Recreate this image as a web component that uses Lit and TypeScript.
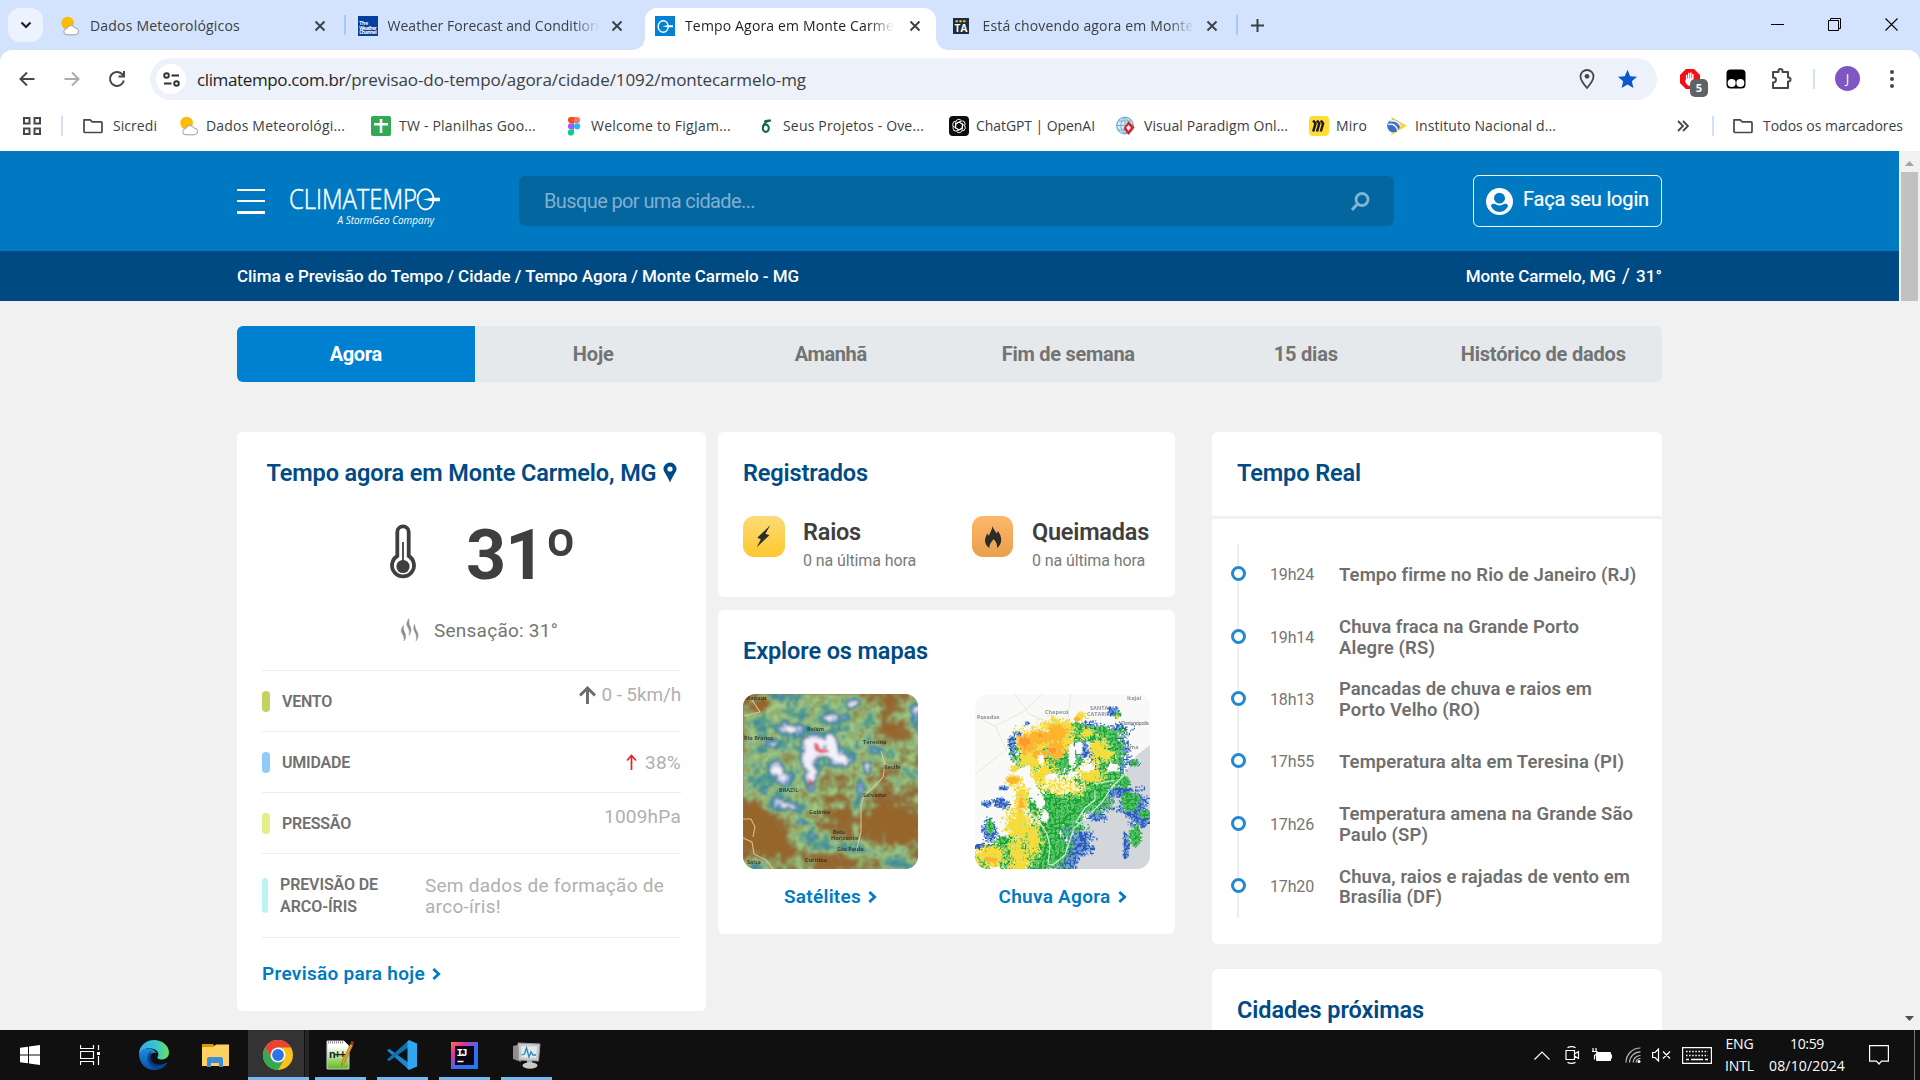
import { LitElement, html, svg, css } from "lit";
import { customElement, property } from "lit/decorators.js";

/* ---------- label whose tracking is set so that it fills a given width ---------- */
@customElement("fit-text")
class FitText extends LitElement {
  @property({ type: Number }) w = 0;
  @property() text = "";
  static styles = css`
    :host { display: block; white-space: nowrap; flex: none; }
    span { display: inline-block; white-space: pre; }
  `;
  updated() {
    const s = this.renderRoot.querySelector("span") as HTMLElement;
    s.style.letterSpacing = "0";
    const nat = s.getBoundingClientRect().width;
    s.style.letterSpacing = (this.w - nat) / this.text.length + "px";
    this.style.width = this.w + "px";
  }
  render() {
    return html`<span>${this.text}</span>`;
  }
}
const T = (text: string, w: number, cls = "") => html`<fit-text class=${cls} .text=${text} .w=${w}></fit-text>`;

/* ---------- procedural map tiles ---------- */
const hash = (x: number, y: number, s: number) => {
  const n = Math.sin(x * 127.1 + y * 311.7 + s * 74.7) * 43758.5453;
  return n - Math.floor(n);
};
const noise = (x: number, y: number, s: number) => {
  const xi = Math.floor(x), yi = Math.floor(y);
  const f = (t: number) => t * t * (3 - 2 * t);
  const u = f(x - xi), v = f(y - yi);
  const a = hash(xi, yi, s), b = hash(xi + 1, yi, s), c = hash(xi, yi + 1, s), d = hash(xi + 1, yi + 1, s);
  return (a + (b - a) * u) * (1 - v) + (c + (d - c) * u) * v;
};
const fbm = (x: number, y: number, s: number) =>
  noise(x / 16, y / 16, s) * 0.35 + noise(x / 7, y / 7, s + 1) * 0.35 + noise(x / 3, y / 3, s + 2) * 0.3;

type Blob4 = [number, number, number, number, number?];
const raster = (cell: number, pick: (x: number, y: number) => string) => {
  const n = Math.ceil(175 / cell);
  const out: Record<string, string> = {};
  for (let j = 0; j < n; j++) {
    let i = 0;
    while (i < n) {
      const c = pick((i + 0.5) * cell, (j + 0.5) * cell);
      let k = i + 1;
      while (k < n && pick((k + 0.5) * cell, (j + 0.5) * cell) === c) k++;
      if (c) out[c] = (out[c] || "") + `M${(i * cell).toFixed(2)} ${(j * cell).toFixed(2)}h${((k - i) * cell).toFixed(2)}v${cell}h-${((k - i) * cell).toFixed(2)}z`;
      i = k;
    }
  }
  return Object.entries(out).map(([c, d]) => svg`<path fill=${c} d=${d}></path>`);
};

const SAT: Blob4[] = [
  [72, 50, 9, 7, 0.7], [66, 64, 7, 8, 0.65], [68, 82, 7, 10, 0.6], [88, 50, 5, 9, 0.65], [83, 60, 9, 4, 0.45], [69, 95, 4, 6, 0.4], [76, 62, 20, 26, 0.18],
  [110, 10, 6, 5, 0.55], [90, 24, 13, 5, 0.45], [45, 35, 13, 5, 0.5], [30, 50, 9, 5, 0.4], [40, 3, 16, 6, 0.35], [60, 18, 8, 10, 0.2],
  [33, 75, 8, 8, 0.4], [40, 84, 7, 6, 0.35], [36, 112, 13, 9, 0.48], [60, 129, 8, 4, 0.38], [58, 115, 8, 6, 0.26], [100, 68, 9, 6, 0.5], [124, 76, 4, 7, 0.5],
  [173, 22, 7, 18, 0.5], [117, 92, 4, 14, 0.34], [113, 120, 5, 24, 0.34], [132, 55, 8, 12, 0.2], [15, 25, 25, 22, 0.14], [95, 60, 14, 10, 0.2],
  [40, 60, 32, 44, 0.16], [115, 25, 32, 24, 0.15], [60, 146, 14, 7, 0.18], [80, 146, 16, 7, 0.2], [102, 150, 20, 7, 0.24],
  [130, 156, 24, 8, 0.26], [158, 170, 18, 7, 0.26], [160, 85, 18, 16, 0.18], [12, 172, 18, 6, 0.24], [155, 60, 22, 14, 0.12], [60, 138, 16, 5, 0.14],
  [10, 90, 20, 12, 0.2], [80, 120, 20, 14, 0.08], [80, 155, 22, 5, 0.16],
  [148, 36, 13, 10, -0.3], [100, 98, 10, 10, -0.16], [92, 125, 20, 12, -0.26], [150, 125, 30, 22, -0.34], [10, 122, 26, 16, -0.3], [30, 150, 26, 18, -0.34], [20, 12, 12, 7, -0.2], [150, 4, 20, 8, -0.24], [95, 172, 30, 6, -0.16], [150, 145, 18, 6, -0.1],
];
const SATC: [number, string][] = [
  [0.18, "#96652b"], [0.25, "#946b35"], [0.3, "#8f7c46"], [0.36, "#8c9258"], [0.42, "#92ad6b"], [0.5, "#9dc987"],
  [0.56, "#78b591"], [0.63, "#4ba092"], [0.71, "#3e8da6"], [0.79, "#6a9dce"], [0.88, "#bccbee"],
];
const satPick = (x: number, y: number) => {
  let v = (fbm(x, y, 3) - 0.5) * 0.72 + 0.33;
  for (const [cx, cy, rx, ry, a = 0] of SAT) v += a * Math.exp(-(((x - cx) / rx) ** 2) - ((y - cy) / ry) ** 2);
  for (const [t, c] of SATC) if (v < t) return c;
  return "#f2f0fa";
};

const BLUE: Blob4[] = [[106, 55, 8, 14], [103, 150, 15, 12], [94, 163, 11, 11], [143, 98, 15, 6], [160, 112, 15, 16], [165, 126, 11, 9], [151, 152, 3, 12], [12, 110, 5, 3], [26, 110, 8, 5], [15, 136, 7, 11], [38, 52, 4, 12], [52, 30, 3, 3], [138, 18, 6, 5], [84, 168, 12, 6], [122, 122, 10, 6], [96, 132, 10, 12], [28, 94, 6, 3], [8, 152, 10, 3], [42, 40, 4, 3], [133, 64, 18, 20], [125, 38, 26, 10], [159, 69, 6, 4], [120, 105, 18, 16]];
const GREEN: Blob4[] = [[85, 62, 20, 22], [86, 115, 28, 30], [112, 100, 24, 20], [134, 60, 16, 20], [122, 41, 26, 9], [65, 155, 28, 28], [155, 108, 9, 9], [160, 142, 7, 11], [159, 69, 5, 3], [15, 132, 4, 7], [100, 36, 14, 7], [150, 88, 6, 6], [75, 140, 14, 32], [35, 160, 22, 18], [60, 110, 7, 16], [142, 21, 4, 3], [132, 84, 16, 12], [8, 170, 10, 8], [170, 120, 6, 5], [56, 62, 18, 16]];
const YELLOW: Blob4[] = [[58, 62, 15, 17], [73, 45, 29, 13], [70, 82, 14, 17], [88, 93, 22, 9], [46, 104, 7, 19], [45, 132, 15, 17], [44, 158, 12, 24], [15, 163, 16, 12], [124, 56, 9, 13], [114, 80, 13, 10], [82, 33, 19, 8], [40, 74, 5, 4], [104, 23, 7, 5], [112, 38, 6, 5], [38, 87, 9, 6], [142, 24, 2, 2], [58, 145, 9, 18], [132, 60, 8, 9]];
const ORANGE: Blob4[] = [[51, 50, 9, 11], [66, 60, 9, 5], [80, 58, 10, 10], [82, 37, 9, 8], [38, 86, 7, 4], [46, 110, 3, 8], [102, 25, 4, 3], [66, 44, 15, 7], [15, 166, 6, 3]];
const HOT: Blob4[] = [[51, 48, 6, 6], [78, 56, 5, 4], [66, 42, 4, 3]];
const VOID: Blob4[] = [[51, 78, 5, 8], [54, 88, 5, 8], [59, 98, 5, 9], [65, 108, 5, 9], [70, 122, 4, 7], [97, 62, 3.5, 12], [104, 54, 4, 7], [66, 66, 3.5, 7], [138, 74, 7, 5], [112, 74, 7, 4], [76, 83, 7, 3]];
const inside = (x: number, y: number, list: Blob4[], s: number, amp: number, grain: number) => {
  let m = -9;
  for (const [cx, cy, rx, ry] of list) m = Math.max(m, 1 - Math.hypot((x - cx) / rx, (y - cy) / ry));
  if (m < -0.6) return false;
  return m + (fbm(x * 1.4, y * 1.4, s) - 0.5) * amp + (hash(x, y, s) - 0.5) * grain > 0.06;
};
const rainPick = (x: number, y: number) => {
  if (inside(x, y, VOID, 5, 0.7, 0.4)) return "";
  if (inside(x, y, HOT, 8, 1, 0.4)) return "#fd9a26";
  if (inside(x, y, ORANGE, 11, 1.1, 0.5)) return "#fcb52b";
  if (inside(x, y, YELLOW, 14, 1.2, 0.75)) {
    const h = hash(x, y, 2);
    if (Math.hypot((x - 88) / 22, (y - 90) / 10) < 1 && h > 0.55) return "#f6f6cf";
    return h > 0.85 ? "#c3d83e" : "#fbdb2f";
  }
  if (inside(x, y, GREEN, 17, 0.9, 0.45)) return hash(x, y, 6) > 0.65 ? "#3fbf50" : "#1ca437";
  if (inside(x, y, BLUE, 21, 1.3, 0.6)) return hash(x, y, 9) > 0.72 ? "#5f97d6" : "#2c5bbf";
  return "";
};

const satMap = html`<svg class="map" viewBox="0 0 175 175">
  <defs><filter id="sb"><feGaussianBlur stdDeviation="0.9" /></filter></defs>
  <rect width="175" height="175" fill="#94703c" />
  <g filter="url(#sb)">${raster(1.4, satPick)}</g>
  <g fill="none" stroke="#eccba5" stroke-width="1.1" opacity=".85">
    <path d="M0 125h8l4 8-2 10M0 144l9 4 2 12 12 6 7 9M138 57l4 14-2 12-10 11-9 7-3 10v27l-5 20M9 6l8 12-16 4" />
  </g>
  <g fill="#e0404f" opacity=".8" filter="url(#sb)"><path d="M71 49l4 1 2 5 8 1 1 2-9 1-5-3zM66 84l4 5-2 5-2-4z" /></g>
  <g class="mt" fill="#222" opacity=".75">
    <text x="2" y="6">Manaus</text><text x="1" y="46">Rio Branco</text><text x="64" y="37">Belém</text><text x="120" y="50">Teresina</text><text x="141" y="75">Recife</text>
    <text x="36" y="98">BRAZIL</text><text x="120" y="103">Salvador</text><text x="66" y="120">Goiânia</text><text x="90" y="140">Belo</text><text x="88" y="146">Horizonte</text><text x="94" y="157">São Paulo</text><text x="62" y="168">Curitiba</text><text x="4" y="170">Salta</text>
  </g>
</svg>`;
const rainMap = html`<svg class="map" viewBox="0 0 175 175">
  <rect width="175" height="175" fill="#f9f9f7" />
  <path d="M175 51l-13 10-8 11-11 18-12 16-13 13-18 17-7 18-18 21h100z" fill="#d3d7db" />
  <g fill="none" stroke="#ebe5e2" stroke-width="1"><path d="M0 22l20 10 28-14 20-18M0 80l26-20 22-22 22-10M40 0l14 20 30 12M96 0l-4 30M20 32l12 26" /></g>
  <g class="mt" fill="#8c9499"><text x="115" y="16">SANTA</text><text x="112" y="22">CATARINA</text><text x="146" y="31" textLength="28">Florianópolis</text><text x="70" y="20">Chapecó</text><text x="2" y="25">Posadas</text><text x="139" y="55">Criciúma</text><text x="152" y="6">Itajaí</text><text x="4" y="154">Uruguaiana</text></g>
  <g>${raster(1.25, rainPick)}</g>
  <path d="M102 138l8-2 14-10 14-13 6-2 8 8 1 14-2 20 8 8v14H80l14-12 8-14 8-6-4-4z" fill="#d3d7db" opacity=".0" />
  <g fill="none" stroke="#e9f2ea" stroke-width="1.2" opacity=".85">
    <path d="M44 114l10 4 10 9 8 13 3 12-2 18 5 1 12-10 5-15 4-12 12-10 16-16 10-15 12-12M120 96l0 10-10 8-9 14 10 4M120 90l20-4" />
  </g>
</svg>`;

/* ---------- icons ---------- */
const X = html`<svg class="x" viewBox="0 0 12 12"><path d="M1.500 1.500l9 9M10.500 1.500l-9 9" stroke="#3c4043" stroke-width="1.900" /></svg>`;
const folder = html`<svg class="i20" viewBox="0 0 20 20"><path d="M1 3.800h6.200l2 2H18a1 1 0 0 1 1 1v8.700a1 1 0 0 1-1 1H2a1 1 0 0 1-1-1z" fill="none" stroke="#474747" stroke-width="1.700" stroke-linejoin="round" /></svg>`;
const weather = html`<svg class="i20" viewBox="0 0 20 20"><circle cx="7.600" cy="7" r="6.300" fill="#fbbc04" /><path d="M7 18.800a3.100 3.100 0 0 1-.2-6.200 4.300 4.300 0 0 1 8-.6 3.400 3.400 0 1 1 .6 6.800z" fill="#fff" stroke="#9aa0a6" stroke-width="1" /></svg>`;
const chev = html`<svg class="chev" viewBox="0 0 10 14"><path d="M1.500 1.500L7.500 7l-6 5.500" fill="none" stroke="#007ac3" stroke-width="3" /></svg>`;
const twc = html`<svg class="i20" viewBox="0 0 20 20"><rect width="20" height="20" fill="#053fa0" /><g class="twc" fill="#fff"><text x="1.200" y="8.600">The</text><text x="1.200" y="13.600" textLength="17.500">Weather</text><text x="1.200" y="18.400" textLength="17.500">Channel</text></g></svg>`;
const ctp = html`<svg class="i20" viewBox="0 0 20 20"><rect width="20" height="20" fill="#0083d2" /><ellipse cx="8.200" cy="10.500" rx="5" ry="5.800" fill="none" stroke="#fff" stroke-width="1.400" /><path d="M7.500 10.300l5-1h5.500v2h-5.500z" fill="#fff" /></svg>`;
const ta = html`<svg class="i20" viewBox="0 0 20 20"><rect x="0" y="2" width="16" height="16" fill="#1c2b3f" /><path d="M2.500 5.300h2.400M6.300 5.300h2.400M10.100 5.300h2.400" stroke="#f4c430" stroke-width="2" /><text class="ta" x="1.600" y="16.300" fill="#fff">TA</text></svg>`;
const sheet = html`<svg class="i20" viewBox="0 0 20 20"><rect width="20" height="20" rx="2" fill="#34a853" /><path d="M10 3v14M3 8.300h14" stroke="#fff" stroke-width="2.600" /></svg>`;
const figma = html`<svg class="i20" viewBox="0 0 20 20"><path d="M10 1H7a3.100 3.100 0 0 0 0 6.200h3z" fill="#f24e1e" /><path d="M10 1h3a3.100 3.100 0 0 1 0 6.200h-3z" fill="#ff7262" /><path d="M10 7.200H7a3.100 3.100 0 0 0 0 6.200h3z" fill="#a259ff" /><circle cx="13.100" cy="10.300" r="3.100" fill="#1abcfe" /><path d="M10 13.400H7a3.100 3.100 0 1 0 3 3.100z" fill="#0acf83" /></svg>`;
const overleaf = html`<svg class="i20" viewBox="0 0 20 20"><ellipse cx="8.800" cy="12.300" rx="3" ry="3.700" fill="none" stroke="#12683a" stroke-width="2" /><path d="M5.800 12C5.500 8 9 5.500 14 4.300 10.500 4.500 8 4 7.500 6" fill="none" stroke="#12683a" stroke-width="1.700" /></svg>`;
const gpt = html`<svg class="i20" viewBox="0 0 20 20"><rect width="20" height="20" rx="4" fill="#0d0d0d" /><g fill="none" stroke="#fff" stroke-width=".9">${[0, 60, 120, 180, 240, 300].map((a) => svg`<path transform="rotate(${a} 10 10)" d="M6.800 9.500V6.300a3 3 0 0 1 5.600-1.500M7 8l3.200-1.900 3.800 2.200"></path>`)}</g></svg>`;
const vp = html`<svg class="i20" viewBox="0 0 20 20"><circle cx="9" cy="9.500" r="8.300" fill="#dcecf5" stroke="#6fb1d4" stroke-width="1.300" /><path d="M1 9.500h16M9 1v17M3 5h12M3 14h12M9 1C3.500 6 3.500 13 9 18M9 1c5.500 5 5.500 12 0 17" fill="none" stroke="#6fb1d4" stroke-width="1" /><path d="M12.500 5l6 6.500-6 7.500-5-6.500z" fill="#d8232a" /><path d="M12.500 9l2.500 2.700-2.500 3-2.300-3z" fill="#fff" /></svg>`;
const miro = html`<svg class="i20" viewBox="0 0 20 20"><rect width="20" height="20" rx="4" fill="#ffdd33" /><path d="M4.200 4.500l2.300 3-2.300 8M8 4.500l2.300 3L8 15.500M11.800 4.500l2.300 3-2.300 8" fill="none" stroke="#1a1a2a" stroke-width="2.500" /></svg>`;
const inst = html`<svg class="i20" viewBox="0 0 20 20"><path d="M4.500 1L20 9.800 4.500 19z" fill="#f7d33a" /><circle cx="6.500" cy="10" r="6.300" fill="#3b6fc9" /><path d="M1 8.500c5-1.500 8.500 1 10 6.500M3.500 5c5-1 8.500 2 10 5" fill="none" stroke="#fff" stroke-width="1.300" /></svg>`;

const TABS = [
  { i: weather, t: "Dados Meteorológicos", w: 150, c: "tab t1" },
  { i: twc, t: "Weather Forecast and Condition", w: 211, c: "tab fade" },
  { i: ctp, t: "Tempo Agora em Monte Carme", w: 209, c: "tab active fade" },
  { i: ta, t: "Está chovendo agora em Monte", w: 211, c: "tab fade" },
];
const MARKS: [unknown, string, number][] = [
  [folder, "Sicredi", 44], [weather, "Dados Meteorológi...", 139], [sheet, "TW - Planilhas Goo...", 137], [figma, "Welcome to FigJam...", 140],
  [overleaf, "Seus Projetos - Ove...", 141], [gpt, "ChatGPT | OpenAI", 119], [vp, "Visual Paradigm Onl...", 144], [miro, "Miro", 31], [inst, "Instituto Nacional d...", 141],
];
const NEWS: [string, [string, number][]][] = [
  ["19h24", [["Tempo firme no Rio de Janeiro (RJ)", 297]]],
  ["19h14", [["Chuva fraca na Grande Porto", 240], ["Alegre (RS)", 96]]],
  ["18h13", [["Pancadas de chuva e raios em", 253], ["Porto Velho (RO)", 141]]],
  ["17h55", [["Temperatura alta em Teresina (PI)", 285]]],
  ["17h26", [["Temperatura amena na Grande São", 294], ["Paulo (SP)", 89]]],
  ["17h20", [["Chuva, raios e rajadas de vento em", 291], ["Brasília (DF)", 103]]],
];

const spacing = css`
  .e2 { margin-left: 17px; }
  .e3 { margin-left: 23px; margin-top: -1px; }
  .e4 { margin-left: 20px; }
  .e5 { margin-left: 20px; margin-top: -1px; }
  .e6 { margin-left: 29px; }
  .ap { margin-left: 23px; }
  .s1 { margin-left: 20px; margin-right: 20px; }
  .k1 { margin-left: 22px; } .k2 { margin-left: 26px; } .k3 { margin-left: 28px; } .k4 { margin-left: 26px; }
  .k5 { margin-left: 25px; } .k6 { margin-left: 21px; } .k7 { margin-left: 21px; } .k8 { margin-left: 20px; }
  .k1 fit-text, .k3 fit-text, .k5 fit-text, .k7 fit-text { margin-left: 7px; }
  .k2 fit-text, .k6 fit-text, .k8 fit-text { margin-left: 8px; }
  .k4 fit-text { margin-left: 6px; }
  .more { margin-left: auto; }
  .s2 { margin: 0 19px 0 23px; }
  .last { margin-right: 17px; }
  .last fit-text { margin-left: 10px; }
  .sla { font-size: 20px; margin: 0 6px; font-weight: 400; }
  .two2 { width: 145px; line-height: 21.5px; }
  .ra { margin-right: 2px; }
  .top { margin-top: 28px; }
  .w0 { margin-left: 4px; }
  .ui2 { font-family: "Open Sans", "Noto Sans", sans-serif; }
  .y1 { margin-left: 15px; } .y2 { margin-left: 11px; } .y3 { margin-left: 13px; } .y4 { margin-left: 11px; } .y5 { margin-left: 11px; }
  .y6 { margin-left: 13px; } .y7 { margin-left: 15px; } .y8 { margin-left: 24px; }
`;

@customElement("app-root")
class AppRoot extends LitElement {
  static styles = [css`
    :host { display: flex; flex-direction: column; width: 1920px; height: 1080px; overflow: hidden; font-family: Roboto, sans-serif; background: #f1f1f1; }
    * { box-sizing: border-box; }
    svg { display: block; flex: none; }
    .ui { font-family: "Open Sans", "Noto Sans", sans-serif; color: #3c4043; }
    .i20 { width: 20px; height: 20px; }
    .x { width: 12px; height: 12px; }

    .strip { height: 50px; background: #d3e2fd; display: flex; align-items: stretch; font-size: 14px; flex: none; }
    .drop { width: 35px; height: 34px; margin: 8px 4px 0 8px; border-radius: 12px; background: #ecf2fe; display: flex; align-items: center; justify-content: center; }
    .tab { width: 297.5px; display: flex; align-items: center; padding: 1px 19px 0 13px; flex: none; }
    .tab fit-text { margin-left: 10px; line-height: 20px; overflow: hidden; }
    .tab .x { margin-left: auto; }
    .fade fit-text { -webkit-mask-image: linear-gradient(90deg, #000 88%, transparent); mask-image: linear-gradient(90deg, #000 88%, transparent); }
    .active { position: relative; color: #1f1f1f; }
    .active::before { content: ""; position: absolute; left: 3px; right: 4px; top: 8px; bottom: 0; border-radius: 12px 12px 0 0; background: #fff; }
    .active::after { content: ""; position: absolute; left: -9px; right: -8px; bottom: 0; height: 12px;
      background: radial-gradient(circle at 0 0, transparent 11.5px, #fff 12px) left / 12px 12px no-repeat, radial-gradient(circle at 100% 0, transparent 11.5px, #fff 12px) right / 12px 12px no-repeat; }
    .active > * { position: relative; }
    .tsep { width: 2px; height: 20px; margin: 15px -1px 0; background: #a8c7fa; flex: none; }
    .plus { margin: 18px 0 0 13px; width: 15px; height: 15px; }
    .win { margin-left: auto; display: flex; align-items: center; gap: 44px; padding-right: 22px; height: 49px; }
    .tools { height: 101px; background: #d3e2fd; flex: none; }
    .tw { background: #fff; height: 101px; border-radius: 12px 12px 0 0; }
    .bar { height: 50px; padding-top: 8px; display: flex; align-items: center; }
    .nav { display: flex; gap: 25px; margin-left: 17px; }
    .omni { margin-left: 23px; width: 1507px; height: 42px; border-radius: 21px; background: #ecf1fa; display: flex; align-items: center; padding-left: 6px; font-size: 17px; }
    .site { width: 30px; height: 30px; border-radius: 50%; background: #fff; display: flex; align-items: center; justify-content: center; margin-right: 11px; }
    .dark { color: #1f1f1f; }
    .omni .r { margin-left: auto; margin-right: 19px; display: flex; gap: 22px; align-items: center; }
    .ext { display: flex; align-items: center; margin-left: 23px; flex: 1; }
    .ab { position: relative; width: 29px; height: 34px; padding-top: 7px; }
    .badge { position: absolute; left: 10px; top: 17px; width: 18px; height: 18px; border-radius: 5px; background: #5f6368; color: #fff; font: 700 11px/18px "Open Sans", sans-serif; text-align: center; }
    .av { width: 25px; height: 25px; border-radius: 50%; background: #7e57c2; color: #fff; font-size: 13px; line-height: 25px; text-align: center; }
    .vs { width: 2px; height: 20px; background: #d0e1fc; flex: none; }
    .marks { height: 51px; display: flex; align-items: center; font-size: 14px; color: #3c4043; }
    .mk { display: flex; align-items: center; }
    .mk fit-text { line-height: 20px; margin-left: 10px; }

    .view { display: flex; height: 879px; flex: none; overflow: hidden; }
    .page { width: 1899px; }
    .hd { height: 100px; background: #0079c3; padding: 0 237px; display: flex; align-items: center; }
    .burger { display: flex; flex-direction: column; gap: 9px; width: 28px; }
    .burger i { height: 2px; background: #fff; }
    .burger i:last-child { height: 3px; }
    .logo { margin-left: 25px; width: 152px; height: 46px; overflow: visible; }
    .search { margin-left: 77px; width: 875px; height: 50px; border-radius: 6px; background: #04669f; color: #7fb0d2; font-size: 20px; display: flex; align-items: center; padding: 0 24px 0 25px; }
    .search svg { margin-left: auto; }
    .login { margin-left: auto; width: 189px; height: 52px; border: 1px solid #fff; border-radius: 6px; color: #fff; font-size: 20px; display: flex; align-items: center; padding-left: 12px; gap: 10px; }
    .login fit-text { padding-bottom: 4px; -webkit-text-stroke: 0.2px #fff; }
    .crumb { height: 50px; background: #004a83; color: #fff; padding: 0 237px; display: flex; align-items: center; font-size: 17px; font-weight: 500; }
    .crumb .loc { margin-left: auto; }
    .body { width: 1425px; margin: 25px 0 0 237px; }
    .tabs { display: flex; height: 56px; border-radius: 6px; background: #e5e9ec; overflow: hidden; color: #737373; font-size: 20px; font-weight: 700; }
    .tabs div { flex: 1; display: flex; align-items: center; justify-content: center; padding-bottom: 1px; }
    .tabs .on { background: #0080d0; color: #fff; }
    .cols { display: flex; margin-top: 50px; align-items: flex-start; }
    .card { background: #fff; border-radius: 6px; }
    .c1 { width: 469px; height: 579px; padding: 29px 25px 0; margin-right: 12px; }
    .c2 { width: 457px; margin-right: 37px; display: flex; flex-direction: column; gap: 13px; }
    .c3 { width: 450px; display: flex; flex-direction: column; gap: 25px; }
    .h { color: #004a86; font-size: 23.5px; font-weight: 600; line-height: 24px; height: 24px; }
    .row { display: flex; }
    .h1 { justify-content: center; gap: 6px; }
    .h1 svg { margin-top: 1px; }
    .temp { height: 60px; margin-top: 37px; display: flex; padding-left: 127px; align-items: center; color: #3f3f3f; font-size: 70px; font-weight: 700; line-height: 60px; gap: 49px; }
    .temp fit-text { padding-top: 6px; }
    .feel { height: 24px; margin-top: 36px; display: flex; align-items: center; padding-left: 138px; gap: 15px; color: #757575; font-size: 19px; }
    .m { border-top: 1px solid #ededed; height: 61px; display: flex; align-items: center; font-size: 19px; color: #b0b0b0; line-height: 21px; }
    .m.tall { height: 84px; }
    .m .bar2 { width: 8px; height: 21px; border-radius: 4px; margin-right: 12px; }
    .m .bar3 { width: 6px; height: 35px; border-radius: 3px; margin-right: 12px; background: #baf4f3; }
    .lb { color: #707070; font-weight: 600; font-size: 16px; }
    .val { margin-left: auto; display: flex; align-items: center; gap: 6px; }
    .up { margin-top: -13px; }
    .b1 { background: #c5d160; } .b2 { background: #90caf9; } .b3 { background: #e6ee8c; }
    .foot { border-top: 1px solid #ededed; height: 73px; display: flex; align-items: center; }
    .lk { color: #007ac3; font-size: 19px; font-weight: 600; display: flex; align-items: center; gap: 7px; }
    .chev { width: 9px; height: 14px; }
    .reg { height: 165px; padding: 29px 25px 0; }
    .regs { display: flex; margin-top: 31px; }
    .tile { width: 42px; height: 41px; border-radius: 11px; display: flex; align-items: center; justify-content: center; margin-right: 18px; flex: none; }
    .ty { background: linear-gradient(#fcdb78, #fdc82c); }
    .to { background: linear-gradient(#fdb76a, #e9a04b); width: 41px; margin-right: 19px; }
    .rt { width: 169px; flex: none; color: #3f3f3f; font-size: 23.5px; font-weight: 600; line-height: 32px; }
    .rt.q { width: 118px; }
    .rs { color: #7a7a7a; font-size: 16px; font-weight: 400; line-height: 26px; }
    .maps { height: 324px; padding: 29px 25px 0; }
    .mg { display: flex; justify-content: space-between; margin-top: 31px; }
    .mc { width: 175px; display: flex; flex-direction: column; align-items: center; gap: 16px; }
    .map { width: 175px; height: 175px; border-radius: 13px; }
    .mt { font: 700 5.5px "Open Sans", sans-serif; filter: blur(0.45px); }
    .lk fit-text { line-height: 24px; }
    .real { height: 512px; }
    .rh { height: 87px; border-bottom: 3px solid #f1f1f1; padding: 29px 25px; }
    .tl { margin: 25px 0 0 25px; border-left: 2px solid #efefef; }
    .ti { height: 62.4px; display: flex; align-items: center; }
    .dot { width: 15px; height: 15px; border-radius: 50%; border: 3px solid #2389d3; background: #fff; margin: -3px 0 0 -8px; flex: none; }
    .tm { margin: -1px 25px 0 24px; font-size: 16px; color: #757575; }
    .tx { color: #6f6f6f; font-weight: 600; font-size: 18.5px; line-height: 20.5px; }
    .near { height: 200px; padding: 29px 25px; }
    .sb { width: 21px; background: #f1f1f1; display: flex; flex-direction: column; align-items: center; }
    .thumb { width: 17px; height: 129px; background: #c1c1c1; margin-top: 6px; }
    .sb .dn { margin: auto 0 9px; }
    .sb .upa { margin-top: 10px; }

    .task { height: 50px; background: #101010; display: flex; flex: none; color: #fff; }
    .ic { width: 51px; margin-right: 11px; height: 50px; display: flex; align-items: center; justify-content: center; border-bottom: 3px solid #76b9ed; padding: 3px 1px 0 0; flex: none; }
    .ic.off { border-color: transparent; padding-right: 0; }
    .ic.w1 { padding-right: 3px; }
    .ic.w3 { margin-right: 7px; }
    .chr { width: 61px; margin-right: 6px; background: linear-gradient(90deg, #333 56px, #111 56px, #111 57px, #262626 57px); }
    .tray { margin-left: auto; display: flex; align-items: center; font-size: 14px; }
    .two { display: flex; flex-direction: column; align-items: center; line-height: 22px; }
    .edge { width: 1px; height: 50px; background: #777; margin: 0 5px 0 25px; }
    .twc { font: 700 5px "Open Sans", sans-serif; }
    .ta { font: 700 10px "Open Sans", sans-serif; }
    .lg { font: 300 27px "Open Sans", sans-serif; }
    .ls { font: italic 10.5px "Open Sans", sans-serif; }
    .np { font: 700 11px "Liberation Mono", monospace; }
    .ij { font: 700 11px "Liberation Mono", monospace; }
  `, spacing];

  render() {
    return html`
      <div class="strip ui">
        <div class="drop"><svg width="12" height="8" viewBox="0 0 12 8"><path d="M1.500 1.500L6 6l4.500-4.500" fill="none" stroke="#1f1f1f" stroke-width="2.200" /></svg></div>
        ${TABS.map((t, k) => html`<div class=${t.c}>${t.i}${T(t.t, t.w)}${X}</div>${k === 0 || k === 3 ? html`<div class="tsep"></div>` : ""}`)}
        <svg class="plus" viewBox="0 0 15 15"><path d="M7.500 1v13M1 7.500h13" stroke="#3c4043" stroke-width="2" /></svg>
        <div class="win">
          <svg width="13" height="13"><path d="M0 6.500h13" stroke="#000" /></svg>
          <svg width="13" height="13"><path d="M.5 2.500h10v10H.5zM2.500 2V.5h10v10H11" fill="none" stroke="#000" /></svg>
          <svg width="13" height="13"><path d="M.5.5l12 12M12.500.5l-12 12" stroke="#000" stroke-width="1.100" /></svg>
        </div>
      </div>

      <div class="tools ui"><div class="tw">
        <div class="bar">
          <div class="nav">
            <svg class="i20" viewBox="0 0 20 20"><path d="M17.500 10H4M10 3.500L3.500 10l6.500 6.500" fill="none" stroke="#474747" stroke-width="2" /></svg>
            <svg class="i20" viewBox="0 0 20 20"><path d="M2.500 10H16M10 3.500l6.500 6.500-6.500 6.500" fill="none" stroke="#a9acb1" stroke-width="2" /></svg>
            <svg class="i20" viewBox="0 0 20 20"><path d="M16.800 11.500A7 7 0 1 1 15 5l1.500 1.500M17 2v5.500h-5.500" fill="none" stroke="#474747" stroke-width="2" /></svg>
          </div>
          <div class="omni">
            <div class="site"><svg width="17" height="17" viewBox="0 0 17 17"><g fill="none" stroke="#303030" stroke-width="1.900"><circle cx="3.500" cy="4.500" r="2.300" /><path d="M8.500 4.500H16M1 12.500h7.500" /><circle cx="13.500" cy="12.500" r="2.300" /></g></svg></div>
            ${T("climatempo.com.br", 148, "dark")}${T("/previsao-do-tempo/agora/cidade/1092/montecarmelo-mg", 461)}
            <div class="r">
              <svg width="16" height="20" viewBox="0 0 16 20"><path d="M8 1a6.500 6.500 0 0 1 6.500 6.500C14.500 11.500 8 19 8 19S1.500 11.500 1.500 7.500A6.500 6.500 0 0 1 8 1z" fill="none" stroke="#474747" stroke-width="1.800" /><circle cx="8" cy="7.300" r="2.400" fill="#474747" /></svg>
              <svg width="21" height="20" viewBox="0 0 24 23"><path d="M12 1l3.100 7.300 7.900.7-6 5.200 1.800 7.700L12 17.800 5.200 21.900 7 14.200 1 9l7.900-.7z" fill="#0b57d0" /></svg>
            </div>
          </div>
          <div class="ext">
            <div class="ab"><svg width="20" height="20" viewBox="0 0 22 22"><path d="M6.500 0h9L22 6.500v9L15.500 22h-9L0 15.500v-9z" fill="#f40d12" /><path d="M6.500 11.500V7a.8.8 0 0 1 1.600 0v3.500h.7V5a.8.8 0 0 1 1.600 0v5.500h.7V4.500a.8.8 0 0 1 1.600 0v6h.7V6a.8.8 0 0 1 1.600 0v8a4.500 4.500 0 0 1-4.500 4.500c-2.500 0-4.500-3-5-5.500z" fill="#fff" /></svg><div class="badge">5</div></div>
            <svg width="20" height="20" viewBox="0 0 20 20" class="e2"><rect width="19" height="19" x=".5" y=".5" rx="4" fill="#000" /><circle cx="5.700" cy="14" r="4" fill="#fff" /><circle cx="14.300" cy="14" r="4" fill="#fff" /></svg>
            <svg width="24" height="24" viewBox="0 0 24 24" class="e3"><path d="M4 5h5.500V4a2 2 0 0 1 4 0v1H19v5.500h.5a2 2 0 0 1 0 4H19V21H4v-5.500h.5a2.500 2.500 0 0 0 0-5H4z" fill="none" stroke="#474747" stroke-width="2" stroke-linejoin="round" /></svg>
            <div class="vs e4"></div>
            <div class="av e5">J</div>
            <svg width="6" height="20" class="e6"><circle cx="3" cy="3" r="2" fill="#474747" /><circle cx="3" cy="10" r="2" fill="#474747" /><circle cx="3" cy="17" r="2" fill="#474747" /></svg>
          </div>
        </div>
        <div class="marks">
          <svg width="18" height="18" viewBox="0 0 18 18" class="ap"><path d="M1 1h5.500v5.500H1zM11.500 1H17v5.500h-5.500zM1 11.500h5.500V17H1zM11.500 11.500H17V17h-5.500z" fill="none" stroke="#474747" stroke-width="2" /></svg>
          <div class="vs s1"></div>
          ${MARKS.map(([i, t, w], k) => html`<div class="mk k${k}">${i}${T(t, w)}</div>`)}
          <svg width="12" height="12" viewBox="0 0 12 12" class="more"><path d="M1 1l5 5-5 5M6 1l5 5-5 5" fill="none" stroke="#474747" stroke-width="1.800" /></svg>
          <div class="vs s2"></div>
          <div class="mk last">${folder}${T("Todos os marcadores", 140)}</div>
        </div>
      </div></div>

      <div class="view">
        <div class="page">
          <div class="hd">
            <div class="burger"><i></i><i></i><i></i></div>
            <svg class="logo" viewBox="0 0 152 46"><text class="lg" x="-1" y="31" fill="#fff" stroke="#fff" stroke-width=".5" textLength="128" lengthAdjust="spacingAndGlyphs">CLIMATEMP</text><ellipse cx="135.500" cy="21.300" rx="8" ry="10.200" fill="none" stroke="#fff" stroke-width="1.800" /><path d="M133 21.500l9-1.700h8v3.500h-8z" fill="#fff" /><text class="ls" x="47.500" y="46" fill="#fff" textLength="96.500" lengthAdjust="spacingAndGlyphs">A StormGeo Company</text></svg>
            <div class="search">${T("Busque por uma cidade...", 211)}<svg width="19" height="19" viewBox="0 0 19 19"><circle cx="11" cy="7.500" r="6" fill="none" stroke="#83b3d3" stroke-width="2.800" /><path d="M6.500 12L1 18" stroke="#83b3d3" stroke-width="3" /></svg></div>
            <div class="login"><svg width="27" height="27" viewBox="0 0 28 28"><circle cx="14" cy="14" r="14" fill="#fff" /><circle cx="14" cy="10.500" r="5.700" fill="#0079c3" /><path d="M5 18.500c1-3 4-2.500 5.500-1.500a6.500 6.500 0 0 0 7 0c1.500-1 4.500-1.500 5.500 1.500A10.500 10.500 0 0 1 14 25a10.500 10.500 0 0 1-9-6.500z" fill="#0079c3" /></svg>${T("Faça seu login", 126)}</div>
          </div>
          <div class="crumb">${T("Clima e Previsão do Tempo / Cidade / Tempo Agora / Monte Carmelo - MG", 562)}${T("Monte Carmelo, MG", 150, "loc")}<span class="sla">/</span>${T("31°", 26)}</div>
          <div class="body">
            <div class="tabs">
              <div class="on">${T("Agora", 52)}</div><div>${T("Hoje", 41)}</div><div>${T("Amanhã", 72)}</div><div>${T("Fim de semana", 133)}</div><div>${T("15 dias", 64)}</div><div>${T("Histórico de dados", 165)}</div>
            </div>
            <div class="cols">
              <div class="card c1">
                <div class="h h1 row">${T("Tempo agora em Monte Carmelo, MG", 390)}<svg width="14" height="21" viewBox="0 0 14 21"><path d="M7 .5a6.500 6.500 0 0 1 6.500 6.500c0 3-3.500 6-6.500 13.500C4 13 .5 10 .5 7A6.500 6.500 0 0 1 7 .5z" fill="#004a86" /><circle cx="7" cy="7" r="2.600" fill="#fff" /></svg></div>
                <div class="temp"><svg width="28" height="58" viewBox="0 0 28 58"><path d="M8.300 33V9a5.700 5.700 0 0 1 11.400 0v24a11 11 0 1 1-11.400 0z" fill="#fff" stroke="#3f3f3f" stroke-width="3.800" /><path d="M14 19v24" stroke="#3f3f3f" stroke-width="1.800" /><circle cx="14" cy="43.500" r="6.600" fill="#3f3f3f" /></svg>${T("31º", 110)}</div>
                <div class="feel"><svg width="19" height="25" viewBox="0 0 19 25"><g fill="#8a8a8a" stroke="#aaa" stroke-width=".6"><path d="M3.500 7C1 11 .5 13 2.500 16c1.300 2 1.800 4.500 1.500 7 2.500-3 2-6.500.5-9C3.200 12 3.300 10 3.500 7zM9 .5C6.500 4 6 6.500 8 9.500c1.300 2 1.800 4.500 1 8C11.500 14 11.500 10.500 10 8 8.800 6 9 3.500 9 .5z" /><path d="M14.500 6c-1.500 3.500-1 6 .8 9 1.200 2 1.400 4.500.7 8 2.800-3.500 2.500-7 1-9.500-1.300-2-2-4.500-2.500-7.500z" /></g></svg>${T("Sensação: 31°", 124)}</div>
                <div class="m top"><div class="bar2 b1"></div>${T("VENTO", 50, "lb")}<div class="val up"><svg width="17" height="18" viewBox="0 0 17 18"><path d="M8.500 18V2.500M1 9.500l7.500-7.500L16 9.500" fill="none" stroke="#6a6a6a" stroke-width="2.900" /></svg>${T("0 - 5km/h", 79.5)}</div></div>
                <div class="m"><div class="bar2 b2"></div>${T("UMIDADE", 68, "lb")}<div class="val"><svg width="11" height="16" viewBox="0 0 11 16" class="ra"><path d="M5.500 16V2M1 6.500l4.500-5 4.500 5" fill="none" stroke="#e2241d" stroke-width="1.700" /></svg>${T("38%", 36)}</div></div>
                <div class="m"><div class="bar2 b3"></div>${T("PRESSÃO", 69, "lb")}<div class="val up">${T("1009hPa", 77)}</div></div>
                <div class="m tall"><div class="bar3"></div><div class="lb two2">${T("PREVISÃO DE", 98)}${T("ARCO-ÍRIS", 77)}</div><div class="sem">${T("Sem dados de formação de", 239)}${T("arco-íris!", 76)}</div></div>
                <div class="foot"><div class="lk">${T("Previsão para hoje", 163)}${chev}</div></div>
              </div>
              <div class="c2">
                <div class="card reg">
                  <div class="h">${T("Registrados", 125)}</div>
                  <div class="regs">
                    <div class="tile ty"><svg width="18" height="25" viewBox="0 0 20 26"><path d="M17 .5L2.500 14.500l4 1.500-4.500 9 14-13.500-4.500-1.500z" fill="#2b2b2b" /></svg></div>
                    <div class="rt">${T("Raios", 58)}<div class="rs">${T("0 na última hora", 113)}</div></div>
                    <div class="tile to"><svg width="18" height="22" viewBox="0 0 18 22"><path d="M8.500 0c1 4 3 4.500 4 7.500L14 5c2 3 3.500 6 3.200 9.500-.3 3-1.700 5.500-4.200 7.500.3-3.500-.5-6-3.500-9C8 15.500 5 18 5.500 22 2.500 20 1 17.500 1 14.500S2.500 9 3.500 7.500L5 10C6 6 8 4.500 8.500 0z" fill="#2b2b2b" /></svg></div>
                    <div class="rt q">${T("Queimadas", 117)}<div class="rs">${T("0 na última hora", 113)}</div></div>
                  </div>
                </div>
                <div class="card maps">
                  <div class="h">${T("Explore os mapas", 185)}</div>
                  <div class="mg">
                    <div class="mc">${satMap}<div class="lk">${T("Satélites", 77)}${chev}</div></div>
                    <div class="mc">${rainMap}<div class="lk">${T("Chuva Agora", 112)}${chev}</div></div>
                  </div>
                </div>
              </div>
              <div class="c3">
                <div class="card real">
                  <div class="rh h">${T("Tempo Real", 124)}</div>
                  <div class="tl">${NEWS.map(([t, l]) => html`<div class="ti"><div class="dot"></div>${T(t, 44, "tm")}<div class="tx">${l.map(([a, w]) => T(a, w))}</div></div>`)}</div>
                </div>
                <div class="card near"><div class="h">${T("Cidades próximas", 187)}</div></div>
              </div>
            </div>
          </div>
        </div>
        <div class="sb">
          <svg width="9" height="5" class="upa"><path d="M0 5l4.500-5L9 5z" fill="#a3a3a3" /></svg>
          <div class="thumb"></div>
          <svg width="9" height="5" class="dn"><path d="M0 0l4.500 5L9 0z" fill="#505050" /></svg>
        </div>
      </div>

      <div class="task">
        <div class="ic off w0"><svg width="20" height="20" viewBox="0 0 20 20"><path d="M0 2.800L8 1.700v7.800H0zM9 1.500L20 0v9.500H9zM0 10.500h8v7.800l-8-1.100zM9 10.500h11V20L9 18.500z" fill="#fff" /></svg></div>
        <div class="ic off w1"><svg width="20" height="20" viewBox="0 0 20 20"><path d="M.5 0v3.500h13V0M.5 20v-3.500h13V20M.5 6.500h13v7H.5zM18.500 0v5M18.500 11v9" fill="none" stroke="#fff" stroke-width="1.200" /><rect x="17" y="7" width="3" height="3" fill="#fff" /></svg></div>
        <div class="ic off"><svg width="30" height="30" viewBox="0 0 30 30"><defs><linearGradient id="eg" x1="0" x2="1"><stop offset="0" stop-color="#31a8e8" /><stop offset=".6" stop-color="#3cc8c8" /><stop offset="1" stop-color="#6be05a" /></linearGradient><linearGradient id="eb" x1="0" y1="0" x2="0" y2="1"><stop offset="0" stop-color="#1b8fe0" /><stop offset="1" stop-color="#0d4fa8" /></linearGradient></defs><path d="M0 14C0 6 7 0 15 0s15 5.500 15 12.500c0 4.500-3.500 7-7.500 7-3 0-4.500-1.300-4-2.300 1.500-2 1-4.700-.5-6.200C14 7 4 7 0 14z" fill="url(#eg)" /><path d="M0 14c1.500-3.500 5-5.500 9-5.500s7.500 2 8.500 4.500c-5-1.500-8.500 3-7 8 1.300 4.500 7 6.500 12 4.500 2-.8 4.500-2.500 5.500-3-2 4.500-7 7.500-13 7.500C6.500 30 0 23 0 14z" fill="url(#eb)" /><path d="M12 11C6 15 7 26 17 29.500c5 0 9.500-3 11-7-2 1-4.500 2-8 2-6 0-9.500-5-7.500-10z" fill="#0c3f8c" opacity=".75" /></svg></div>
        <div class="ic off w3"><svg width="27" height="23" viewBox="0 0 27 23"><path d="M0 0h11l2 3H0z" fill="#d8960a" /><path d="M0 3h11l3-2.500h13V22H0z" fill="#fdd263" /><path d="M5 23v-8a2 2 0 0 1 2-2h12a2 2 0 0 1 2 2v8h-4v-4H9v4z" fill="#3c8fd6" /></svg></div>
        <div class="ic chr"><svg width="30" height="30" viewBox="0 0 30 30"><circle cx="15" cy="15" r="15" fill="#fbc116" /><path d="M2 7.500L8.500 18.800 15 15V7.500h13A15 15 0 0 0 2 7.500z" fill="#ea4335" /><path d="M15 15L8.500 18.800 2 7.500A15 15 0 0 0 15 30l6.500-11.200z" fill="#34a853" /><circle cx="15" cy="15" r="7.500" fill="#fff" /><circle cx="15" cy="15" r="5.900" fill="#2a73e8" /></svg></div>
        <div class="ic"><svg width="28" height="30" viewBox="0 0 28 30"><defs><linearGradient id="ng" x1="0" y1="0" x2="0" y2="1"><stop offset=".2" stop-color="#fff" /><stop offset="1" stop-color="#5db81a" /></linearGradient></defs><path d="M1 1h17l5 5v23H1z" fill="url(#ng)" stroke="#ccc" /><path d="M2 2.500h16" stroke="#888" stroke-width="2" stroke-dasharray="1 1" /><text class="np" x="3" y="18" fill="#222" textLength="17">n++</text><path d="M24.500 4l2.500 1-8.500 18-3 2.500.5-4z" fill="#e0a020" stroke="#8a5a10" stroke-width=".5" /><path d="M24.500 4l1-3 2.500 1-1 3z" fill="#b03030" /></svg></div>
        <div class="ic"><svg width="30" height="30" viewBox="0 0 30 30"><path d="M0 10.500l2-1.800L22 23v6.500L21 29z" fill="#1a85cf" /><path d="M0 19.500l2 1.800L22 7V.5L21 1z" fill="#0f6fb5" /><path d="M22 0l8 3.500v23L22 30l-1.500-1.500V1.500z" fill="#2fa8f0" /></svg></div>
        <div class="ic"><svg width="27" height="27" viewBox="0 0 27 27"><defs><linearGradient id="ig" x1="0" y1="0" x2="1" y2="1"><stop offset="0" stop-color="#fc7a36" /><stop offset=".25" stop-color="#e0339a" /><stop offset=".55" stop-color="#3a6cf0" /><stop offset="1" stop-color="#1a7cf8" /></linearGradient></defs><rect width="27" height="27" fill="url(#ig)" /><rect x="4" y="4" width="19" height="19" fill="#0b0414" /><text class="ij" x="5.500" y="14" fill="#fff" textLength="11">IJ</text><path d="M6.500 19.500h6" stroke="#fff" stroke-width="1.500" /></svg></div>
        <div class="ic"><svg width="29" height="27" viewBox="0 0 29 27"><path d="M1 4l8-2v18l-8-3z" fill="#8d8d8d" /><path d="M6 1l22 1-1.500 17L6.500 18z" fill="#c9c9c9" stroke="#999" /><path d="M9 4L25 4.500l-1 11.500L9.500 15.500z" fill="#dfe9ee" /><path d="M9.500 13l3-1 2-6 2.500 9 2-5 2 3 3 0" fill="none" stroke="#2a86b8" stroke-width="1.300" /><path d="M15 18h5v4h-5z" fill="#b0b0b0" /><ellipse cx="18" cy="23.500" rx="7.500" ry="3.300" fill="#c9c9c9" /></svg></div>
        <div class="tray ui2">
          <svg width="16" height="9" viewBox="0 0 16 9"><path d="M.5 8.500L8 1l7.500 7.500" fill="none" stroke="#fff" stroke-width="1.200" /></svg>
          <svg width="16" height="18" viewBox="0 0 16 18" class="y1"><path d="M1 4.500h8.500v9H1zM9.500 8l4-2.500v7l-4-2.500M2.500 1.800c2-1.500 6-1.500 8 0M2.500 16.200c2 1.500 6 1.500 8 0" fill="none" stroke="#fff" stroke-width="1.200" /></svg>
          <svg width="20" height="15" viewBox="0 0 20 15" class="y2"><path d="M4.500 4.500h14v8h-14z" fill="#fff" stroke="#fff" /><path d="M19.500 6.500v4M1 0v3M4 0v3M0 3.500h5v2l-2.500 2v4" fill="none" stroke="#fff" stroke-width="1.200" /></svg>
          <svg width="16" height="16" viewBox="0 0 16 16" class="y3"><g fill="none" stroke="#bbb" stroke-width="1.200"><path d="M1 15.500A14.500 14.500 0 0 1 15.500 1M4.500 15.500A11 11 0 0 1 15.500 4.800M8 15.500a7.500 7.500 0 0 1 7.500-7M11 15.500a4.500 4.500 0 0 1 4.500-4" /></g><circle cx="14" cy="14.500" r="1.500" fill="#fff" /></svg>
          <svg width="19" height="14" viewBox="0 0 19 14" class="y4"><path d="M.6 4.500h2.500L6.500 1v12L3.100 9.500H.6zM11 3.500l7 7M18 3.500l-7 7" fill="none" stroke="#fff" stroke-width="1.200" /></svg>
          <svg width="30" height="17" viewBox="0 0 30 17" class="y5"><path d="M.6.6h28.800v15.800H.6z" fill="none" stroke="#fff" stroke-width="1.200" /><path d="M4 4.500h22M4 8.500h22" stroke="#fff" stroke-width="1.500" stroke-dasharray="1.500 1.600" /><path d="M4 12.500h3M9 12.500h12M23 12.500h3" stroke="#fff" stroke-width="1.400" /></svg>
          <div class="two y6">${T("ENG", 28)}${T("INTL", 29)}</div>
          <div class="two y7">${T("10:59", 34)}${T("08/10/2024", 76)}</div>
          <svg width="20" height="20" viewBox="0 0 20 20" class="y8"><path d="M.6.6h18.800v15.500h-6.900L10 19l-2.500-2.900H.6z" fill="none" stroke="#fff" stroke-width="1.200" /></svg>
          <div class="edge"></div>
        </div>
      </div>
    `;
  }
}
